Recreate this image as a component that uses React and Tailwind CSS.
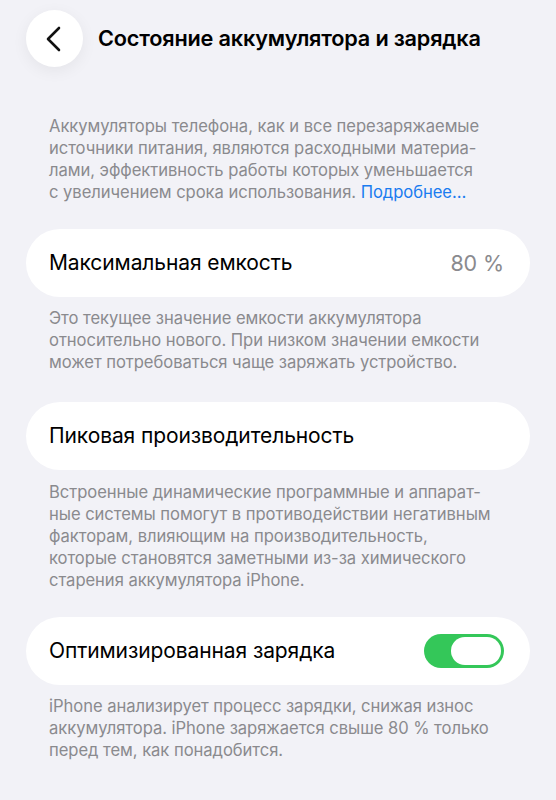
function Note({ children, className = "" }) {
  return (
    <p className={`px-[49px] text-[16.6px] leading-[22px] tracking-[-0.05px] text-[#8a8a8e] ${className}`}>
      {children}
    </p>
  );
}

function Row({ label, children, className = "" }) {
  return (
    <div className={`mx-[26px] flex h-[68px] items-center justify-between rounded-full bg-white pl-[23px] pr-[26px] ${className}`}>
      <span className="text-[21px] text-black">{label}</span>
      {children}
    </div>
  );
}

export default function App() {
  return (
    <div className="min-h-[800px] bg-[#f2f2f7] pb-10 font-['Inter',sans-serif] tracking-[-0.1px]">
      <div className="flex items-center pl-[26px] pt-[10px]">
        <button className="flex h-[57px] w-[57px] items-center justify-center rounded-full bg-white shadow-[0_4px_16px_rgba(0,0,0,0.06)]">
          <svg width="20" height="28" viewBox="0 0 20 28" fill="none" className="-ml-[2px]">
            <path d="M15 3 L4 14 L15 25" stroke="#111" strokeWidth="2.6" strokeLinecap="round" strokeLinejoin="round" />
          </svg>
        </button>
        <h1 className="ml-[15px] text-[21.7px] font-semibold tracking-[-0.2px] text-black">Состояние аккумулятора и зарядка</h1>
      </div>

      <Note className="mt-[48px]">
        Аккумуляторы телефона, как и все перезаряжаемые<br />
        источники питания, являются расходными материа-<br />
        лами, эффективность работы которых уменьшается<br />
        с увеличением срока использования.{" "}
        <span className="text-[#1a7cf0]">Подробнее…</span>
      </Note>

      <Row label="Максимальная емкость" className="mt-[26px]">
        <span className="text-[21.5px] text-[#8a8a8e]">80 %</span>
      </Row>
      <Note className="mt-[10px]">
        Это текущее значение емкости аккумулятора<br />
        относительно нового. При низком значении емкости<br />
        может потребоваться чаще заряжать устройство.
      </Note>

      <Row label="Пиковая производительность" className="mt-[29px]" />
      <Note className="mt-[11px] leading-[21.5px]">
        Встроенные динамические программные и аппарат-<br />
        ные системы помогут в противодействии негативным<br />
        факторам, влияющим на производительность,<br />
        которые становятся заметными из-за химического<br />
        старения аккумулятора iPhone.
      </Note>

      <Row label="Оптимизированная зарядка" className="mt-[26px]">
        <div className="flex h-[34px] w-[80px] items-center justify-end rounded-full bg-[#34c759] p-[3px]">
          <div className="h-[28px] w-[50px] rounded-full bg-white" />
        </div>
      </Row>
      <Note className="mt-[10px]">
        iPhone анализирует процесс зарядки, снижая износ<br />
        аккумулятора. iPhone заряжается свыше 80 % только<br />
        перед тем, как понадобится.
      </Note>
    </div>
  );
}
